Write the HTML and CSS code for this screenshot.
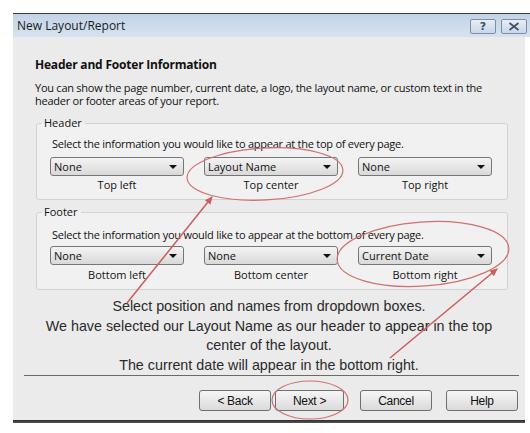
FILE: index.html
```html
<!DOCTYPE html>
<html>
<head>
<meta charset="utf-8">
<link rel="stylesheet" href="styles.css">
</head>
<body>
<div class="page">
  <div class="dialog">
    <div class="titlebar">
      <span class="title">New Layout/Report</span>
      <div class="caption-btns">
        <span class="cap-btn">?</span>
        <span class="cap-btn">
          <svg width="12" height="9" viewBox="0 0 12 9"><path d="M1.5 1 L10.5 8 M10.5 1 L1.5 8" stroke="#3d4e66" stroke-width="1.6" fill="none"/></svg>
        </span>
      </div>
    </div>
    <div class="content">
      <h1 class="heading">Header and Footer Information</h1>
      <p class="intro">You can show the page number, current date, a logo, the layout name, or custom text in the header or footer areas of your report.</p>

      <fieldset class="group">
        <legend>Header</legend>
        <div class="instr">Select the information you would like to appear at the top of every page.</div>
        <div class="row">
          <div class="col"><div class="select"><span>None</span><i class="arrow"></i></div><div class="lbl">Top left</div></div>
          <div class="col"><div class="select"><span>Layout Name</span><i class="arrow"></i></div><div class="lbl">Top center</div></div>
          <div class="col"><div class="select"><span>None</span><i class="arrow"></i></div><div class="lbl">Top right</div></div>
        </div>
      </fieldset>

      <fieldset class="group footer">
        <legend>Footer</legend>
        <div class="instr">Select the information you would like to appear at the bottom of every page.</div>
        <div class="row">
          <div class="col"><div class="select"><span>None</span><i class="arrow"></i></div><div class="lbl">Bottom left</div></div>
          <div class="col"><div class="select"><span>None</span><i class="arrow"></i></div><div class="lbl">Bottom center</div></div>
          <div class="col"><div class="select"><span>Current Date</span><i class="arrow"></i></div><div class="lbl">Bottom right</div></div>
        </div>
      </fieldset>

      <div class="note">
        Select position and names from dropdown boxes.<br>
        We have selected our Layout Name as our header to appear in the top<br>
        center of the layout.<br>
        The current date will appear in the bottom right.
      </div>
      <div class="sep"></div>
      <div class="buttons">
        <button class="btn back">&lt; Back</button>
        <button class="btn next">Next &gt;</button>
        <button class="btn cancel">Cancel</button>
        <button class="btn help">Help</button>
      </div>
    </div>
    <div class="bottom-edge"></div>
  </div>
</div>
<svg class="annot" width="530" height="433" viewBox="0 0 530 433">
  <defs>
    <marker id="ah" markerWidth="8" markerHeight="8" refX="7" refY="4" orient="auto" markerUnits="userSpaceOnUse">
      <path d="M0 0.5 L8 4 L0 7.5 Z" fill="#cf5b5b"/>
    </marker>
  </defs>
  <ellipse cx="265" cy="174" rx="78" ry="26" transform="rotate(-3 265 174)" fill="none" stroke="#d07070" stroke-width="1.2"/>
  <ellipse cx="423" cy="254" rx="86" ry="32" transform="rotate(-4 423 254)" fill="none" stroke="#d07070" stroke-width="1.2"/>
  <ellipse cx="310" cy="400" rx="38" ry="19" fill="none" stroke="#d07070" stroke-width="1.2"/>
  <line x1="127" y1="303" x2="212" y2="197" stroke="#cf5b5b" stroke-width="1.5" marker-end="url(#ah)"/>
  <line x1="390" y1="358" x2="497" y2="269" stroke="#cf5b5b" stroke-width="1.5" marker-end="url(#ah)"/>
</svg>
</body>
</html>
```
FILE: styles.css
```css
html, body {
  margin: 0;
  padding: 0;
  background: #ffffff;
  width: 530px;
  height: 433px;
  overflow: hidden;
  position: relative;
}
.page {
  padding-top: 13px;
  padding-left: 13px;
}
.dialog {
  width: 517px;
  border-top: 1px solid #3a3a3a;
}
.titlebar {
  height: 23px;
  display: flex;
  align-items: center;
  justify-content: space-between;
  background: linear-gradient(#c3d4e8, #d6e2ef);
  padding-left: 4px;
  box-sizing: border-box;
}
.title {
  font-family: "Open Sans", "Noto Sans", sans-serif;
  font-size: 12px;
  color: #1b1b1b;
}
.caption-btns {
  display: flex;
  gap: 5px;
  padding-right: 3px;
  margin-top: 2px;
}
.cap-btn {
  width: 24px;
  height: 13px;
  border: 1px solid #7d8fa8;
  border-radius: 2px;
  background: linear-gradient(#e6edf6, #c9d7e8);
  display: flex;
  align-items: center;
  justify-content: center;
  font-family: "DejaVu Sans", sans-serif;
  font-size: 11px;
  font-weight: bold;
  color: #3d4e66;
}
.content {
  width: 512px;
  height: 383px;
  background: #ebebeb;
  box-sizing: border-box;
  padding: 20px 0 0 22px;
  font-family: "Open Sans", "Noto Sans", sans-serif;
  font-size: 11px;
  color: #111;
}
.heading {
  margin: 0;
  font-size: 12px;
  line-height: 16px;
  font-weight: bold;
  letter-spacing: -0.2px;
}
.intro {
  margin: 8px 0 0 0;
  width: 460px;
  line-height: 13px;
  letter-spacing: -0.25px;
}
.group {
  margin: 9px 0 0 1px;
  width: 472px;
  box-sizing: border-box;
  border: 1px solid #d2d2d2;
  border-radius: 3px;
  background: #f1f1f1;
  padding: 7px 0 7px 13px;
}
.group.footer {
  margin-top: 5px;
}
.group.footer .instr {
  margin-top: 2px;
}
.group.footer .lbl {
  margin-top: 3px;
}
.group legend {
  padding: 0 3px 0 2px;
  margin-left: -8px;
  line-height: 14px;
}
.instr {
  line-height: 14px;
  padding-left: 2px;
  letter-spacing: -0.25px;
}
.row {
  display: flex;
  gap: 20px;
  margin-top: 6px;
}
.group.footer .row {
  margin-top: 4px;
}
.col {
  width: 134px;
  display: flex;
  flex-direction: column;
  align-items: center;
}
.select {
  width: 134px;
  height: 19px;
  box-sizing: border-box;
  border: 1px solid #767676;
  border-radius: 3px;
  background: linear-gradient(#f4f4f4, #d9d9d9);
  display: flex;
  align-items: center;
  justify-content: space-between;
  padding: 0 6px 0 3px;
}
.arrow {
  width: 0;
  height: 0;
  border-left: 4px solid transparent;
  border-right: 4px solid transparent;
  border-top: 4px solid #111;
}
.lbl {
  margin-top: 2px;
  line-height: 14px;
}
.note {
  margin: 7px 0 0 -22px;
  width: 512px;
  text-align: center;
  font-family: "Liberation Sans", Arial, sans-serif;
  font-size: 14.3px;
  line-height: 19.5px;
  color: #2a2a2a;
}
.sep {
  margin-left: -11px;
  width: 495px;
  height: 1px;
  background: #6a6a6a;
}
.buttons {
  display: flex;
  margin-top: 14px;
  margin-left: 164px;
}
.btn {
  height: 21px;
  width: 72px;
  box-sizing: border-box;
  border: 1px solid #6f6f6f;
  border-radius: 3px;
  background: linear-gradient(#f6f6f6, #dadada);
  font-family: "Liberation Sans", Arial, sans-serif;
  font-size: 12px;
  color: #111;
  padding: 0;
  letter-spacing: -0.3px;
}
.next { margin-left: 4px; width: 69px; }
.cancel { margin-left: 16px; }
.help { margin-left: 14px; }
.bottom-edge {
  width: 512px;
  height: 3px;
  background: linear-gradient(#2e2e2e, #555);
}
.annot {
  position: absolute;
  top: 0;
  left: 0;
  pointer-events: none;
}
```
